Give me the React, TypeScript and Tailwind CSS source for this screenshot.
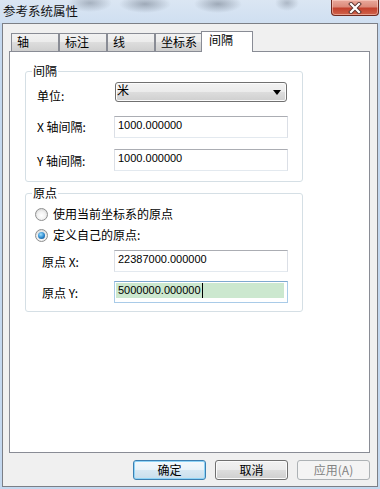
import * as React from "react";

const cjk = "font-['Noto_Sans_CJK_SC','Noto_Sans_CJK_JP',sans-serif]";
const latin = "font-['Liberation_Sans',Arial,sans-serif]";

function CloseButton() {
  return (
    <div className="mr-[1px] h-[16px] w-[48px] rounded-b-[4px] border border-t-0 border-[#6e2a20] bg-[linear-gradient(#e9a99c,#dc8a7a_45%,#c3412d_55%,#d0644c)] shadow-[inset_0_0_0_1px_rgba(255,220,210,0.5)] flex items-center justify-center">
      <svg width="16" height="12" viewBox="0 0 16 12">
        <path d="M4 2 L12 10 M12 2 L4 10" stroke="#5a3430" strokeWidth="4" strokeLinecap="square" />
        <path d="M4 2 L12 10 M12 2 L4 10" stroke="#ffffff" strokeWidth="2.2" strokeLinecap="square" />
      </svg>
    </div>
  );
}

function Tab({ label, selected }: { label: string; selected?: boolean }) {
  if (selected) {
    return (
      <div className="relative z-10 -ml-[2px] -mb-[1px] h-[21px] w-[52px] border border-b-0 border-[#898c95] bg-white pl-[7px] pt-[1px] leading-[14px]">
        {label}
      </div>
    );
  }
  return (
    <div className="h-[18px] w-[48px] border border-b-0 border-[#898c95] bg-[linear-gradient(#f2f2f2,#ebebeb_50%,#dddddd_50%,#cfcfcf)] pl-[5px] pt-[1px] leading-[14px]">
      {label}
    </div>
  );
}

function TextBox({ value }: { value: string }) {
  return (
    <div
      className={`h-[22px] w-[174px] border border-[#dbdfe6] border-t-[#abadb3] border-b-[#e3e9ef] bg-white pl-[3px] pt-[2px] text-[11px] leading-[13px] ${latin}`}
    >
      {value}
    </div>
  );
}

function FocusedTextBox({ value }: { value: string }) {
  return (
    <div className="h-[22px] w-[174px] border border-[#a9cbe8] border-t-[#7fa9d0] bg-white pl-[1px] pt-[1px]">
      <div className={`flex h-[15px] w-[168px] items-center bg-[#cce8cf] pl-[2px] text-[11px] leading-[13px] ${latin}`}>
        <span>{value}</span>
        <span className="ml-[1px] h-[15px] w-[1px] bg-black" />
      </div>
    </div>
  );
}

function Radio({ checked }: { checked?: boolean }) {
  return (
    <span className="flex h-[13px] w-[13px] shrink-0 items-center justify-center rounded-full border border-[#8e8f8f] bg-[radial-gradient(circle_at_50%_60%,#ffffff,#f2f2f2_45%,#c9c9c9)]">
      {checked && (
        <span className="h-[7px] w-[7px] rounded-full bg-[radial-gradient(circle_at_40%_35%,#9ee0ff,#2a86cc_55%,#0d3d70)]" />
      )}
    </span>
  );
}

function Group({ title, height, children }: { title: string; height: string; children: React.ReactNode }) {
  return (
    <div className={`relative w-[278px] ${height} rounded-[3px] border border-[#d5dfe5]`}>
      <span className="absolute -top-[8px] left-[6px] bg-white px-[1px] leading-[14px]">{title}</span>
      {children}
    </div>
  );
}

function Button({ label, kind }: { label: string; kind: "default" | "normal" | "disabled" }) {
  const styles = {
    default:
      "border-[#3c7fb1] shadow-[inset_0_0_0_1px_#8fd4f7] bg-[linear-gradient(#f4f9fc,#e9f3f9_50%,#d7e8f3_50%,#c9deec)] text-black",
    normal:
      "border-[#707070] shadow-[inset_0_0_0_1px_#fbfbfb] bg-[linear-gradient(#f2f2f2,#ebebeb_50%,#dddddd_50%,#cfcfcf)] text-black",
    disabled: "border-[#adb2b5] bg-[#f4f4f4] text-[#838383]",
  }[kind];
  return (
    <div className={`flex h-[20px] w-[73px] items-center justify-center rounded-[3px] border leading-[14px] ${styles}`}>
      {label}
    </div>
  );
}

export default function App() {
  return (
    <div className={`flex h-[489px] w-[380px] flex-col overflow-hidden bg-[#c4d8ef] text-[12px] text-black ${cjk}`}>
      {/* title bar */}
      <div className="flex h-[23px] shrink-0 items-start justify-between bg-[radial-gradient(ellipse_22px_9px_at_90px_3px,rgba(70,80,95,0.35),transparent),radial-gradient(ellipse_26px_9px_at_145px_4px,rgba(70,80,95,0.4),transparent),radial-gradient(ellipse_24px_9px_at_218px_4px,rgba(70,80,95,0.4),transparent),radial-gradient(ellipse_12px_8px_at_287px_3px,rgba(70,80,95,0.3),transparent),linear-gradient(#dbe6f3,#cfdff1)]">
        <span className="pl-[3px] pt-[3px] text-[12.5px] leading-[15px] text-[#111]">参考系统属性</span>
        <CloseButton />
      </div>

      {/* dialog body */}
      <div className="mx-[2px] mb-[2px] flex flex-1 flex-col border border-[#7c7f86] bg-[#f0f0f0]">
        <div className="mt-[7px] flex h-[20px] items-end pl-[8px]">
          <Tab label="轴" />
          <Tab label="标注" />
          <Tab label="线" />
          <Tab label="坐标系" />
          <Tab label="间隔" selected />
        </div>

        <div className="ml-[6px] flex h-[402px] w-[361px] flex-col border border-[#898c95] bg-white pl-[15px] pt-[19px]">
          <Group title="间隔" height="h-[111px]">
            <div className="flex flex-col pl-[11px] pt-[10px]">
              <div className="flex h-[20px] items-start">
                <span className="mt-[7px] w-[78px] leading-[14px]">单位:</span>
                <div className="flex h-[20px] w-[172px] items-start justify-between rounded-[3px] border border-[#707070] bg-[linear-gradient(#f2f2f2,#ebebeb_50%,#dddddd_50%,#cfcfcf)] pl-[1px] pr-[5px] shadow-[inset_0_0_0_1px_#fbfbfb]">
                  <span className="leading-[14px]">米</span>
                  <svg width="8" height="5" viewBox="0 0 8 5" className="mt-[7px]">
                    <path d="M0 0 H8 L4 5 Z" fill="#000" />
                  </svg>
                </div>
              </div>
              <div className="mt-[14px] flex h-[22px] items-start">
                <span className="mt-[4px] w-[77px] leading-[14px]">X 轴间隔:</span>
                <TextBox value="1000.000000" />
              </div>
              <div className="mt-[11px] flex h-[22px] items-start">
                <span className="mt-[5px] w-[77px] leading-[14px]">Y 轴间隔:</span>
                <TextBox value="1000.000000" />
              </div>
            </div>
          </Group>

          <div className="mt-[11px]">
            <Group title="原点" height="h-[119px]">
              <div className="flex flex-col pt-[12px]">
                <div className="flex h-[16px] items-center gap-[5px] pl-[9px]">
                  <Radio />
                  <span className="leading-[14px]">使用当前坐标系的原点</span>
                </div>
                <div className="mt-[5px] flex h-[16px] items-center gap-[5px] pl-[9px]">
                  <Radio checked />
                  <span className="leading-[14px]">定义自己的原点:</span>
                </div>
                <div className="mt-[7px] flex h-[22px] items-start pl-[16px]">
                  <span className="mt-[5px] w-[72px] leading-[14px]">原点 X:</span>
                  <TextBox value="22387000.000000" />
                </div>
                <div className="mt-[9px] flex h-[22px] items-start pl-[16px]">
                  <span className="mt-[5px] w-[72px] leading-[14px]">原点 Y:</span>
                  <FocusedTextBox value="5000000.000000" />
                </div>
              </div>
            </Group>
          </div>
        </div>

        <div className="mt-[7px] flex justify-end gap-[9px] pr-[7px]">
          <Button label="确定" kind="default" />
          <Button label="取消" kind="normal" />
          <Button label="应用(A)" kind="disabled" />
        </div>
      </div>
    </div>
  );
}
